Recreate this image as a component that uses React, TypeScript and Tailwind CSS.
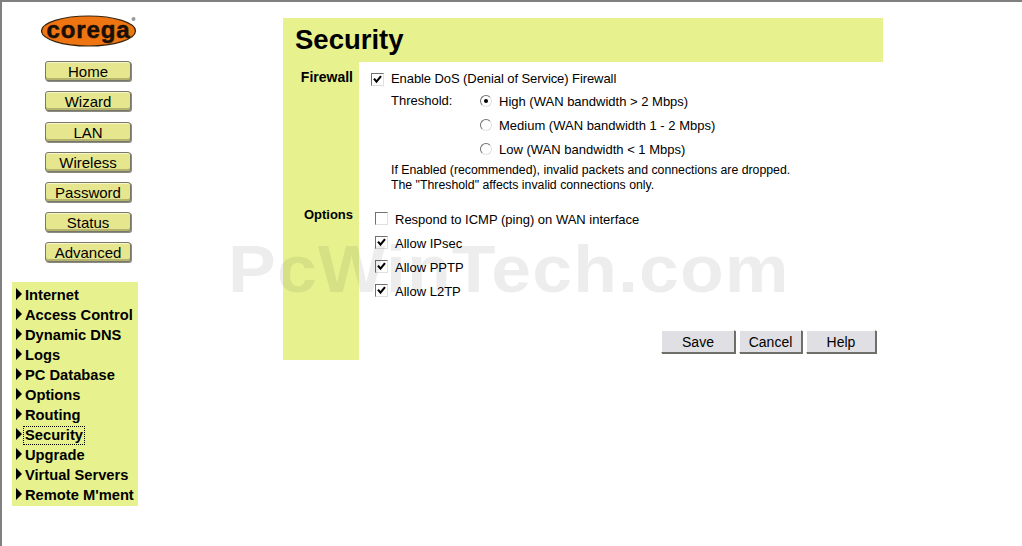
const NAV_BUTTONS = [
  { label: 'Home', className: 'mt-0' },
  { label: 'Wizard', className: 'mt-[10px]' },
  { label: 'LAN', className: 'mt-[11px]' },
  { label: 'Wireless', className: 'mt-[10px]' },
  { label: 'Password', className: 'mt-[10px]' },
  { label: 'Status', className: 'mt-[10px]' },
  { label: 'Advanced', className: 'mt-[10px]' },
]

const MENU_ITEMS = [
  'Internet',
  'Access Control',
  'Dynamic DNS',
  'Logs',
  'PC Database',
  'Options',
  'Routing',
  'Security',
  'Upgrade',
  'Virtual Servers',
  "Remote M'ment",
]

function Checkbox({ checked, className = '' }: { checked?: boolean; className?: string }): React.JSX.Element {
  return (
    <span className={`flex h-[13px] w-[13px] shrink-0 items-center justify-center border border-t-[#707070] border-l-[#707070] border-r-[#e0e0e0] border-b-[#e0e0e0] bg-white ${className}`}>
      {checked && (
        <svg width="9" height="9" viewBox="0 0 9 9">
          <path d="M1 3.6 L3.5 6.6 L8 1.2" fill="none" stroke="#000" strokeWidth="2.1" />
        </svg>
      )}
    </span>
  )
}

function Radio({ checked }: { checked?: boolean }): React.JSX.Element {
  return (
    <span className="flex h-[12px] w-[12px] shrink-0 items-center justify-center rounded-full border border-t-[#707070] border-l-[#707070] border-r-[#e0e0e0] border-b-[#e0e0e0] bg-white">
      {checked && <span className="h-[4px] w-[4px] rounded-full bg-black" />}
    </span>
  )
}

function RadioRow({ checked, label, className }: { checked?: boolean; label: string; className: string }): React.JSX.Element {
  return (
    <div className={`flex h-[16px] items-center ${className}`}>
      <span className="-mt-[3px] flex w-[19px]">
        <Radio checked={checked} />
      </span>
      {label}
    </div>
  )
}

function OptionRow({ checked, label, className }: { checked?: boolean; label: string; className: string }): React.JSX.Element {
  return (
    <div className={`flex h-[16px] items-center ${className}`}>
      <Checkbox checked={checked} className="-mt-[3px] mr-[7px]" />
      {label}
    </div>
  )
}

function ActionButton({ label, width }: { label: string; width: string }): React.JSX.Element {
  return (
    <button className={`h-[23px] ${width} border border-t-white border-l-white border-r-[#6f6f6a] border-b-[#6f6f6a] bg-[#e0dfe3] text-[14px] leading-none text-black shadow-[1px_1px_0_#6f6f6a]`}>
      {label}
    </button>
  )
}

export default function App(): React.JSX.Element {
  return (
    <div className="relative flex h-[546px] w-[1022px] overflow-hidden border-t-2 border-l-2 border-[#808080] bg-white font-['Liberation_Sans',Arial,sans-serif] text-black">
      {/* Left column */}
      <aside className="flex w-[281px] shrink-0 flex-col">
        <div className="mt-[13px] ml-[39px] h-[32px] w-[96px]">
          <svg width="96" height="32" viewBox="0 0 96 32">
            <ellipse cx="47.5" cy="16" rx="47" ry="15" fill="#ee7512" stroke="#3a2208" strokeWidth="1.2" />
            <text x="47.5" y="22.5" textAnchor="middle" fontFamily="'Liberation Sans', Arial, sans-serif" fontWeight="700" fontSize="24" letterSpacing="0.9" stroke="#1a0f05" strokeWidth="0.5" fill="#1a0f05">corega</text>
            <circle cx="92.5" cy="4" r="2" fill="#9a9a9a" />
          </svg>
        </div>

        <nav className="mt-[14px] ml-[43px] flex w-[86px] flex-col">
          {NAV_BUTTONS.map(btn => (
            <button
              key={btn.label}
              className={`h-[20px] w-[86px] rounded-[3px] border border-[#77776a] bg-[#e6e68e] text-[15px] leading-[17px] text-black shadow-[inset_0_1px_0_#f6f6c8,inset_0_-2px_0_#b4b46e,1px_1px_0_#8a8a80] ${btn.className}`}
            >
              {btn.label}
            </button>
          ))}
        </nav>

        <ul className="mt-[20px] ml-[10px] flex w-[126px] flex-col bg-[#e7f28f] pt-[3px] pb-[1px] text-[14.7px] leading-[20px] font-bold">
          {MENU_ITEMS.map(item => (
            <li key={item} className="flex h-[20px] items-center whitespace-nowrap">
              <svg className="mr-[3px] ml-[4px] shrink-0 -translate-y-[1px]" width="6" height="12" viewBox="0 0 6 12">
                <path d="M0 0 L6 6 L0 12 Z" fill="#000" />
              </svg>
              {item === 'Security' ? (
                <span className="-ml-[1px] px-[1px] leading-[17px] outline-1 outline-dotted outline-black">{item}</span>
              ) : (
                item
              )}
            </li>
          ))}
        </ul>
      </aside>

      {/* Security panel */}
      <main className="mt-[16px] flex h-[342px] w-[600px] shrink-0 flex-col bg-[#e7f28f]">
        <h1 className="h-[44px] pl-[12px] text-[27.5px] leading-[44px] font-bold">Security</h1>
        <div className="flex flex-1">
          <div className="w-[76px] shrink-0 pr-[6px] text-right text-[14px] leading-[16px] font-bold">
            <div className="mt-[7px]">Firewall</div>
            <div className="mt-[122px] text-[13px]">Options</div>
          </div>
          <div className="flex-1 bg-white text-[13px] leading-[16px]">
            <div className="mt-[9px] ml-[12px] flex h-[16px] items-center tracking-[-0.08px]">
              <Checkbox checked className="mr-[7px]" />
              Enable DoS (Denial of Service) Firewall
            </div>
            <div className="mt-[6px] ml-[32px] flex">
              <span className="w-[89px]">Threshold:</span>
              <div className="flex flex-col">
                <RadioRow checked label="High (WAN bandwidth > 2 Mbps)" className="mt-[1px]" />
                <RadioRow label="Medium (WAN bandwidth 1 - 2 Mbps)" className="mt-[8px]" />
                <RadioRow label="Low (WAN bandwidth < 1 Mbps)" className="mt-[8px]" />
              </div>
            </div>
            <p className="mt-[5px] ml-[32px] text-[12.3px] leading-[15px]">
              If Enabled (recommended), invalid packets and connections are dropped.
              <br />
              The "Threshold" affects invalid connections only.
            </p>
            <div className="mt-[19px] ml-[16px] flex flex-col">
              <OptionRow label="Respond to ICMP (ping) on WAN interface" className="mt-0" />
              <OptionRow checked label="Allow IPsec" className="mt-[8px]" />
              <OptionRow checked label="Allow PPTP" className="mt-[8px]" />
              <OptionRow checked label="Allow L2TP" className="mt-[8px]" />
            </div>
            <div className="mt-[30px] flex justify-end gap-[4px] pr-[7px]">
              <ActionButton label="Save" width="w-[74px]" />
              <ActionButton label="Cancel" width="w-[63px]" />
              <ActionButton label="Help" width="w-[70px]" />
            </div>
          </div>
        </div>
      </main>

      {/* Watermark sits over the page */}
      <div className="pointer-events-none absolute top-[228px] left-[226px] origin-left scale-x-[1.07] text-[67px] leading-[78px] font-bold tracking-[1px] whitespace-nowrap text-black/[0.07]">
        PcWinTech.com
      </div>
    </div>
  )
}
